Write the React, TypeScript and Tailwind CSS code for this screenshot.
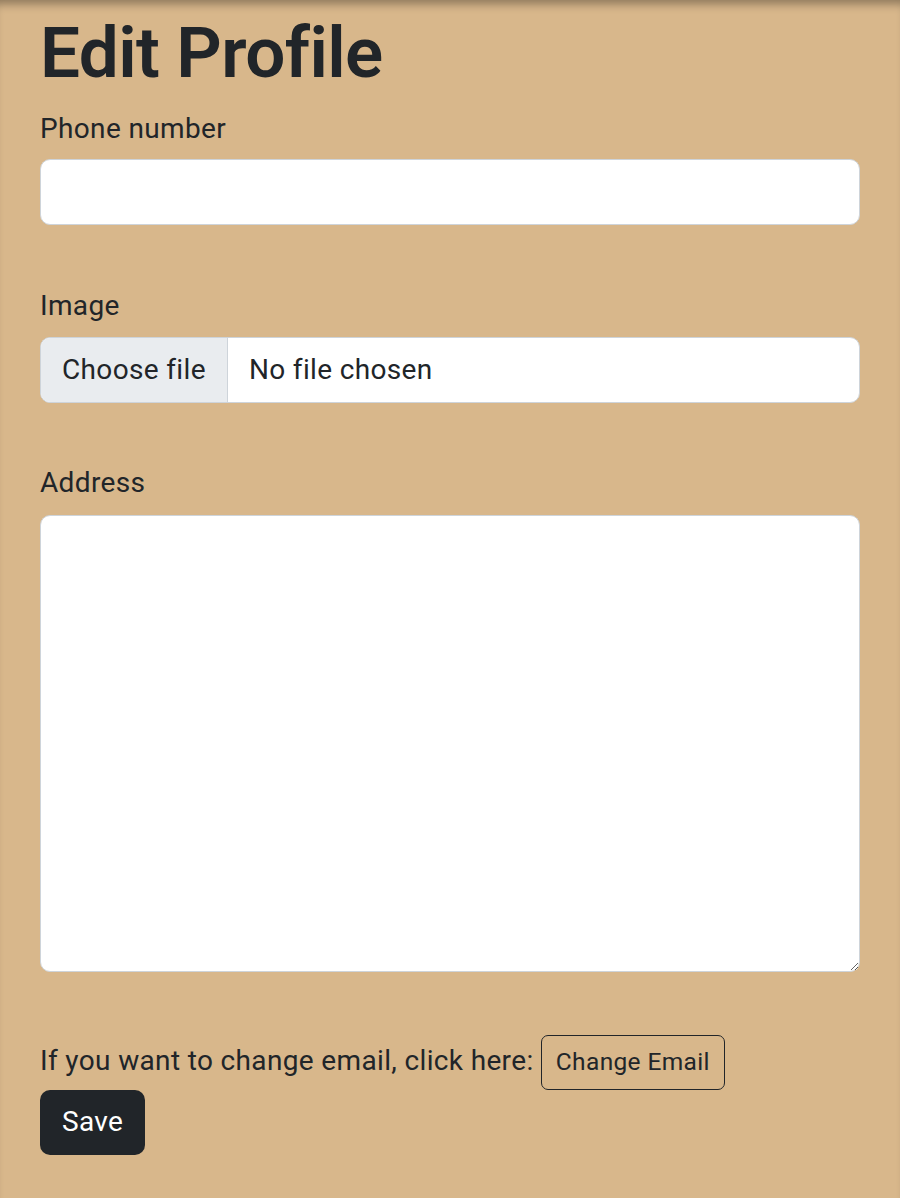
import React from "react";

export default function App() {
  return (
    <div className="min-h-screen bg-[#d8b78b] shadow-[inset_0_10px_10px_-6px_rgba(0,0,0,0.35)] px-10 pt-[9px] pb-10 font-['Roboto','Liberation_Sans',sans-serif] text-[#212529] tracking-[0.35px]">
      <h1 className="text-[71px] font-semibold leading-[1.25] tracking-[-0.6px]">Edit Profile</h1>

      <form className="mt-[10px]" onSubmit={(e) => e.preventDefault()}>
        <div className="mb-[60px]">
          <label className="block text-[28px] leading-[42px] mb-[9px]">
            Phone number
          </label>
          <input
            type="text"
            className="block w-full h-[66px] rounded-[10px] border-[1.5px] border-[#ced4da] bg-white px-5 text-[28px] outline-none"
          />
        </div>

        <div className="mb-[59px]">
          <label className="block text-[28px] leading-[42px] mb-[10px]">
            Image
          </label>
          <div className="flex h-[66px] w-full overflow-hidden rounded-[10px] border-[1.5px] border-[#ced4da] bg-white text-[28px]">
            <span className="flex items-center bg-[#e9ecef] px-[21px] border-r-[1.5px] border-[#ced4da]">
              Choose file
            </span>
            <span className="flex items-center px-[21px]">No file chosen</span>
          </div>
        </div>

        <div className="mb-[63px]">
          <label className="block text-[28px] leading-[42px] mb-[11px]">
            Address
          </label>
          <textarea className="block w-full h-[457px] rounded-[10px] border-[1.5px] border-[#ced4da] bg-white px-5 py-[10px] text-[28px] outline-none" />
        </div>

        <p className="text-[28px] leading-[42px]">
          If you want to change email, click here:{" "}
          <button
            type="button"
            className="inline-block rounded-[7px] border-[1.5px] border-[#212529] px-[14px] py-[8px] text-[24.5px] leading-[1.5] align-baseline"
          >
            Change Email
          </button>
        </p>

        <button
          type="submit"
          className="block rounded-[10px] bg-[#212529] px-[22px] py-[11.5px] text-[28px] leading-[42px] text-white"
        >
          Save
        </button>
      </form>
    </div>
  );
}
